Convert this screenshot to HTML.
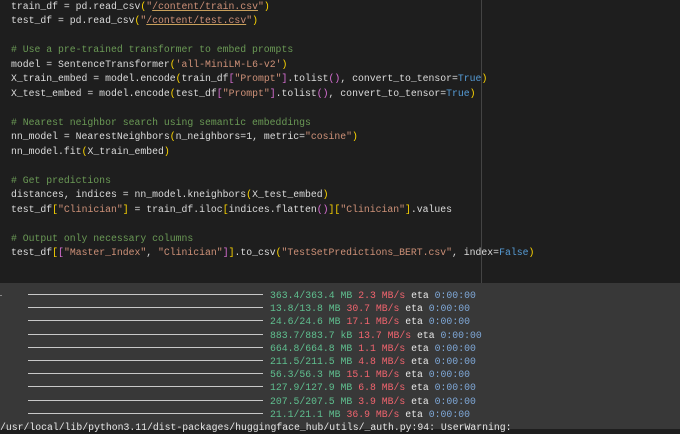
<!DOCTYPE html>
<html><head><meta charset="utf-8"><style>
html,body{margin:0;padding:0;width:680px;height:429px;overflow:hidden;background:#1e1e1e}
.code{position:absolute;left:0;top:0;width:680px;height:283px;background:#1e1e1e}
.vl{position:absolute;left:481px;top:0;width:1px;height:283px;background:#444}
pre{margin:0;font-family:"Liberation Mono",monospace;font-size:9.8px;color:#dcdcdc;white-space:pre}
.c pre{position:absolute;left:11px;top:0;line-height:14.47px}
.s{color:#ce9178}.u{text-decoration:underline;text-decoration-color:#c9a05a}
.cm{color:#6a9955}.y{color:#ffd700}.p{color:#da70d6}.b{color:#569cd6}
.out{position:absolute;left:0;top:283px;width:680px;height:146px;background:#383838}
.o pre{position:absolute;left:0;top:6px;line-height:13.2px}
.bar{display:inline-block;width:235px;height:1px;background:#c8c8c8;vertical-align:3px;margin-left:28px;margin-right:7px}
.g{color:#5fbf8f}.r{color:#f0646e}.e{color:#e8e8e8}.t{color:#7fa8d8}
.tick{position:absolute;left:0;top:295px;width:2px;height:1px;background:#888}
</style></head><body>
<div class="code c"><pre>train_df = pd.read_csv<span class="y">(</span><span class="s">"<span class="u">/content/train.csv</span>"</span><span class="y">)</span>
test_df = pd.read_csv<span class="y">(</span><span class="s">"<span class="u">/content/test.csv</span>"</span><span class="y">)</span>

<span class="cm"># Use a pre-trained transformer to embed prompts</span>
model = SentenceTransformer<span class="y">(</span><span class="s">'all-MiniLM-L6-v2'</span><span class="y">)</span>
X_train_embed = model.encode<span class="y">(</span>train_df<span class="p">[</span><span class="s">"Prompt"</span><span class="p">]</span>.tolist<span class="p">()</span>, convert_to_tensor=<span class="b">True</span><span class="y">)</span>
X_test_embed = model.encode<span class="y">(</span>test_df<span class="p">[</span><span class="s">"Prompt"</span><span class="p">]</span>.tolist<span class="p">()</span>, convert_to_tensor=<span class="b">True</span><span class="y">)</span>

<span class="cm"># Nearest neighbor search using semantic embeddings</span>
nn_model = NearestNeighbors<span class="y">(</span>n_neighbors=1, metric=<span class="s">"cosine"</span><span class="y">)</span>
nn_model.fit<span class="y">(</span>X_train_embed<span class="y">)</span>

<span class="cm"># Get predictions</span>
distances, indices = nn_model.kneighbors<span class="y">(</span>X_test_embed<span class="y">)</span>
test_df<span class="y">[</span><span class="s">"Clinician"</span><span class="y">]</span> = train_df.iloc<span class="y">[</span>indices.flatten<span class="p">()</span><span class="y">]</span><span class="y">[</span><span class="s">"Clinician"</span><span class="y">]</span>.values

<span class="cm"># Output only necessary columns</span>
test_df<span class="y">[</span><span class="p">[</span><span class="s">"Master_Index"</span>, <span class="s">"Clinician"</span><span class="p">]</span><span class="y">]</span>.to_csv<span class="y">(</span><span class="s">"TestSetPredictions_BERT.csv"</span>, index=<span class="b">False</span><span class="y">)</span></pre></div>
<div class="vl"></div>
<div class="out o"><pre><span class="bar"></span><span class="g">363.4/363.4 MB</span> <span class="r">2.3 MB/s</span> <span class="e">eta</span> <span class="t">0:00:00</span>
<span class="bar"></span><span class="g">13.8/13.8 MB</span> <span class="r">30.7 MB/s</span> <span class="e">eta</span> <span class="t">0:00:00</span>
<span class="bar"></span><span class="g">24.6/24.6 MB</span> <span class="r">17.1 MB/s</span> <span class="e">eta</span> <span class="t">0:00:00</span>
<span class="bar"></span><span class="g">883.7/883.7 kB</span> <span class="r">13.7 MB/s</span> <span class="e">eta</span> <span class="t">0:00:00</span>
<span class="bar"></span><span class="g">664.8/664.8 MB</span> <span class="r">1.1 MB/s</span> <span class="e">eta</span> <span class="t">0:00:00</span>
<span class="bar"></span><span class="g">211.5/211.5 MB</span> <span class="r">4.8 MB/s</span> <span class="e">eta</span> <span class="t">0:00:00</span>
<span class="bar"></span><span class="g">56.3/56.3 MB</span> <span class="r">15.1 MB/s</span> <span class="e">eta</span> <span class="t">0:00:00</span>
<span class="bar"></span><span class="g">127.9/127.9 MB</span> <span class="r">6.8 MB/s</span> <span class="e">eta</span> <span class="t">0:00:00</span>
<span class="bar"></span><span class="g">207.5/207.5 MB</span> <span class="r">3.9 MB/s</span> <span class="e">eta</span> <span class="t">0:00:00</span>
<span class="bar"></span><span class="g">21.1/21.1 MB</span> <span class="r">36.9 MB/s</span> <span class="e">eta</span> <span class="t">0:00:00</span>
<span class="e">/usr/local/lib/python3.11/dist-packages/huggingface_hub/utils/_auth.py:94: UserWarning:</span></pre></div>
<div class="tick"></div>
</body></html>
